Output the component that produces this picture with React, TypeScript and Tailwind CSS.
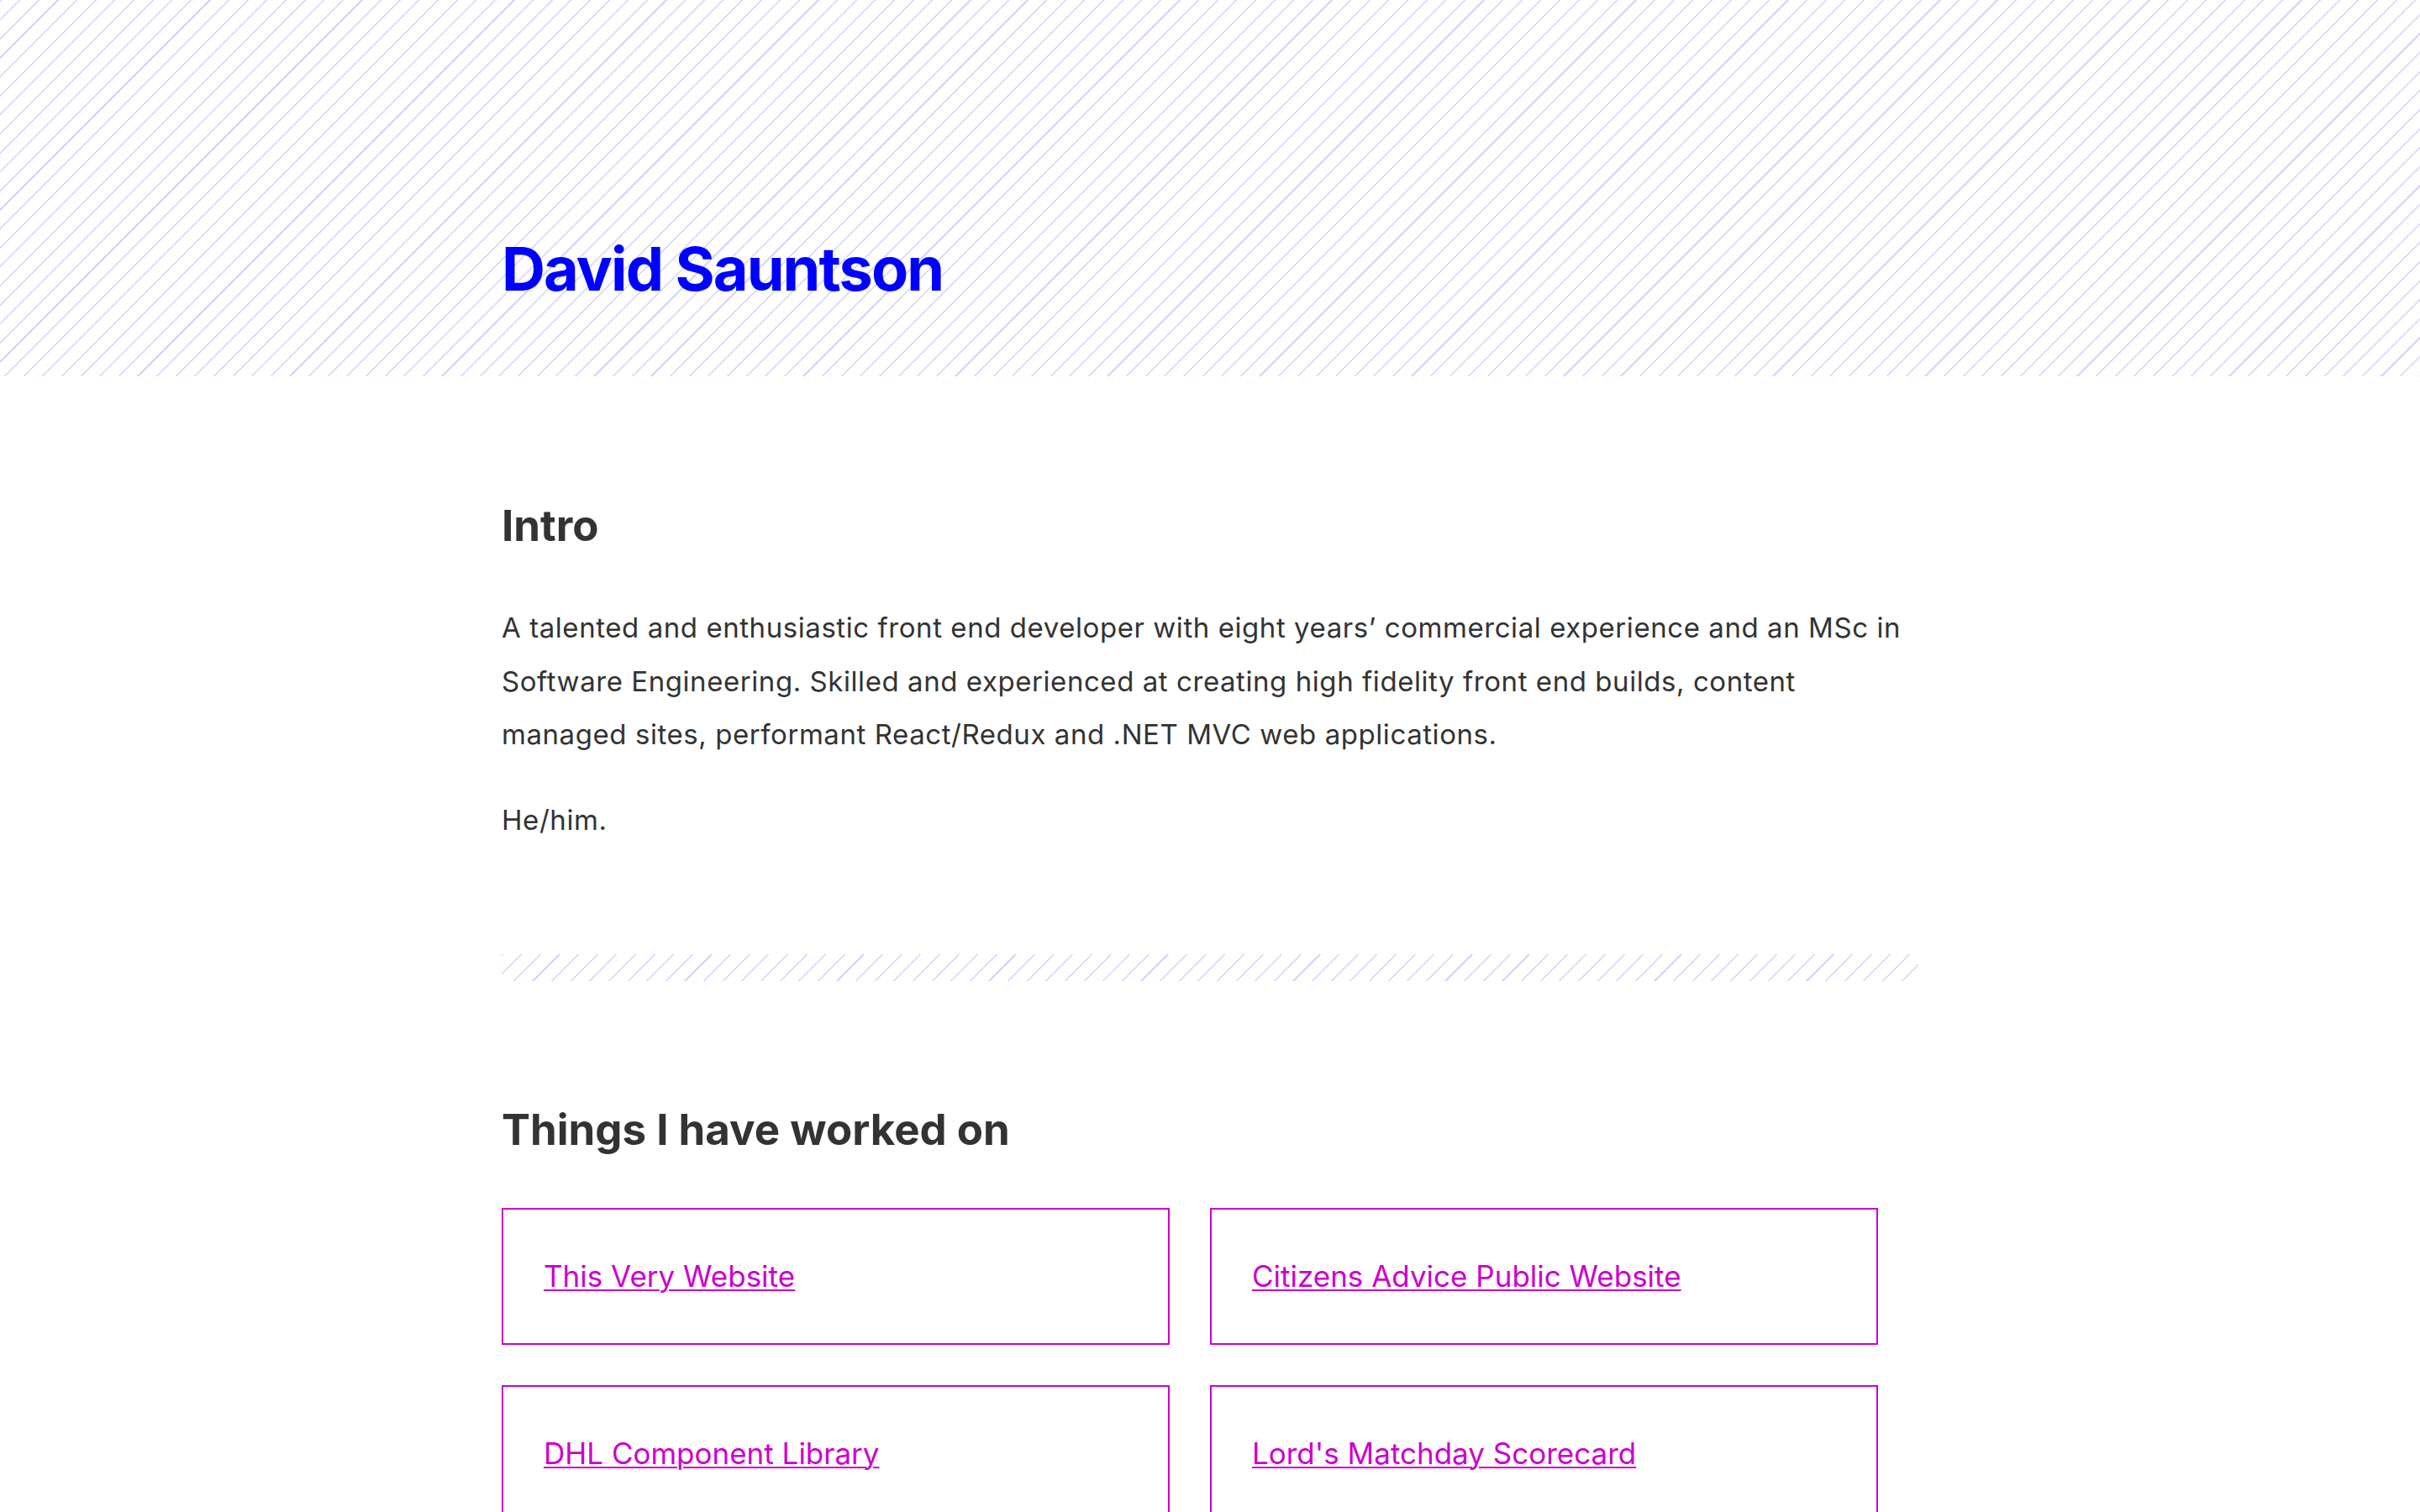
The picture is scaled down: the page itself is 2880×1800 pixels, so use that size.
const PROJECTS = [
  "This Very Website",
  "Citizens Advice Public Website",
  "DHL Component Library",
  "Lord's Matchday Scorecard",
];

const stripes =
  "bg-[repeating-linear-gradient(135deg,#d4d4fb_0px,#d4d4fb_1.5px,transparent_1.5px,transparent_16px)]";

function ProjectCard({ title }: { title: string }) {
  return (
    <div className="border-2 border-[#cc00cc] p-12">
      <a
        href="#"
        className="text-[35px] leading-[62.5px] text-[#cc00cc] underline underline-offset-[3px] decoration-2"
      >
        {title}
      </a>
    </div>
  );
}

export default function App() {
  return (
    <div className="min-h-screen bg-white font-['Inter',sans-serif] text-[#333]">
      <header className={"h-[448px] " + stripes}>
        <div className="w-[1686px] mx-auto pt-[284px]">
          <h1 className="text-[72px] leading-none font-bold text-[#0000ff] tracking-[-0.026em]">
            David Sauntson
          </h1>
        </div>
      </header>

      <main className="w-[1686px] mx-auto">
        <section className="pt-[152px]">
          <h2 className="text-[51px] leading-none font-bold">Intro</h2>
          <p className="mt-[65px] max-w-[1676px] text-[33px] leading-[63.5px] tracking-[0.017em]">
            A talented and enthusiastic front end developer with eight years’
            commercial experience and an MSc in Software Engineering. Skilled
            and experienced at creating high fidelity front end builds, content
            managed sites, performant React/Redux and .NET MVC web applications.
          </p>
          <p className="mt-[38px] text-[33px] leading-[63.5px] tracking-[0.017em]">
            He/him.
          </p>
        </section>

        <div className={"mt-[128px] h-8 " + stripes} />

        <section className="pt-[151px] pb-24">
          <h2 className="text-[51px] leading-none font-bold">
            Things I have worked on
          </h2>
          <div className="mt-[68px] grid grid-cols-[repeat(2,795px)] gap-12">
            {PROJECTS.map((p) => (
              <ProjectCard key={p} title={p} />
            ))}
          </div>
        </section>
      </main>
    </div>
  );
}
